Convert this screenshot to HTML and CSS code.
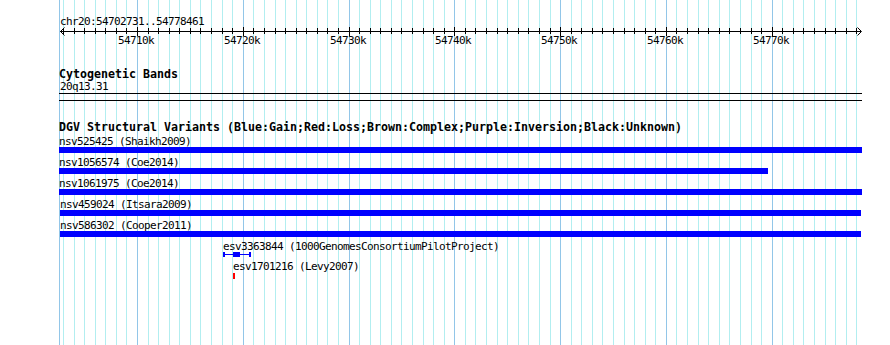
FILE: index.html
```html
<!DOCTYPE html>
<html>
<head>
    <meta charset="UTF-8">
    <title>chr20:54702731..54778461</title>
    <link rel="stylesheet" href="styles.css">
    <script src="ruler.js" defer></script>
</head>
<body>
    <div class="panel">
        <div id="grid" class="grid">
            <div class="grid-line edge" style="left:59px"></div>
        </div>

        <div class="tracks">
            <div class="ruler">
                <div class="ruler-name">chr20:54702731..54778461</div>
                <div class="axis"></div>
                <svg class="arrow left" width="5" height="9" viewBox="0 0 5 9">
                    <polyline points="4.5,0.5 0.5,4.5 4.5,8.5" fill="none" stroke="#000" stroke-width="1"/>
                </svg>
                <svg class="arrow right" width="5" height="9" viewBox="0 0 5 9">
                    <polyline points="0.5,0.5 4.5,4.5 0.5,8.5" fill="none" stroke="#000" stroke-width="1"/>
                </svg>
                <div id="ticks"></div>
                <span class="tick-label" style="left:118px">54710k</span>
                <span class="tick-label" style="left:224px">54720k</span>
                <span class="tick-label" style="left:330px">54730k</span>
                <span class="tick-label" style="left:435px">54740k</span>
                <span class="tick-label" style="left:541px">54750k</span>
                <span class="tick-label" style="left:647px">54760k</span>
                <span class="tick-label" style="left:753px">54770k</span>
            </div>

            <div class="track">
                <div class="track-title">Cytogenetic Bands</div>
                <div class="feature-label band-name">20q13.31</div>
                <div class="band"></div>
            </div>

            <div class="track">
                <div class="track-title">DGV Structural Variants (Blue:Gain;Red:Loss;Brown:Complex;Purple:Inversion;Black:Unknown)</div>
                <div class="feature-list">
                    <div class="feature" style="padding-left:59px">
                        <div class="feature-label">nsv525425 (Shaikh2009)</div>
                        <div class="bar gain" style="width:803px"></div>
                    </div>
                    <div class="feature" style="padding-left:59px">
                        <div class="feature-label">nsv1056574 (Coe2014)</div>
                        <div class="bar gain" style="width:709px"></div>
                    </div>
                    <div class="feature" style="padding-left:59px">
                        <div class="feature-label">nsv1061975 (Coe2014)</div>
                        <div class="bar gain" style="width:803px"></div>
                    </div>
                    <div class="feature" style="padding-left:60px">
                        <div class="feature-label">nsv459024 (Itsara2009)</div>
                        <div class="bar gain" style="width:801px"></div>
                    </div>
                    <div class="feature" style="padding-left:60px">
                        <div class="feature-label">nsv586302 (Cooper2011)</div>
                        <div class="bar gain" style="width:801px"></div>
                    </div>
                    <div class="feature" style="padding-left:223px">
                        <div class="feature-label">esv3363844 (1000GenomesConsortiumPilotProject)</div>
                        <svg class="span-glyph" width="28" height="5" viewBox="0 0 28 5">
                            <rect x="0" y="0" width="2" height="5" fill="#0000ff"/>
                            <rect x="0" y="2" width="28" height="1" fill="#0000ff"/>
                            <rect x="10" y="0" width="7" height="5" fill="#0000ff"/>
                            <rect x="26" y="0" width="2" height="5" fill="#0000ff"/>
                        </svg>
                    </div>
                    <div class="feature" style="padding-left:233px">
                        <div class="feature-label">esv1701216 (Levy2007)</div>
                        <div class="point loss"></div>
                    </div>
                </div>
            </div>
        </div>
    </div>
</body>
</html>
```

FILE: styles.css
```css
body {
    margin: 0;
    background: #fff;
    color: #000;
    font-family: "DejaVu Sans Mono", monospace;
}

.panel {
    position: relative;
    width: 890px;
    height: 345px;
    overflow: hidden;
}

/* background grid, one line per kb */
.grid {
    position: absolute;
    top: 0;
    left: 0;
    right: 0;
    bottom: 0;
}

.grid-line {
    position: absolute;
    top: 0;
    bottom: 0;
    width: 1px;
    background: #b2eef0;
}

.grid-line.major,
.grid-line.edge {
    background: #92c6e8;
}

.tracks {
    position: relative;
}

/* ruler */
.ruler {
    position: relative;
    height: 48px;
}

.ruler-name {
    padding: 15px 0 0 60px;
    font-size: 11px;
    letter-spacing: -0.62px;
    line-height: 13px;
}

.axis {
    position: absolute;
    left: 60px;
    top: 31px;
    width: 801px;
    height: 1px;
    background: #000;
}

.arrow {
    position: absolute;
    top: 27px;
}

.arrow.left {
    left: 60px;
}

.arrow.right {
    left: 857px;
}

.tick {
    position: absolute;
    top: 28px;
    width: 1px;
    height: 6px;
    background: #000;
}

.tick.major {
    top: 27px;
    height: 9px;
}

.tick-label {
    position: absolute;
    top: 35px;
    font-size: 11px;
    letter-spacing: -0.62px;
    line-height: 11px;
}

/* tracks */
.track-title {
    margin: 20px 0 0 59px;
    font-size: 11.63px;
    font-weight: bold;
    line-height: 13px;
    white-space: nowrap;
}

.feature-label {
    font-size: 11px;
    letter-spacing: -0.62px;
    line-height: 11px;
    white-space: nowrap;
}

.band-name {
    margin-left: 60px;
}

.band {
    margin: 1px 0 0 59px;
    width: 803px;
    height: 6px;
    border-top: 1px solid #000;
    border-bottom: 1px solid #000;
}

.feature-list {
    margin-top: 2px;
}

.feature {
    margin-bottom: 4px;
}

.bar {
    height: 6px;
}

.gain {
    background: #0000ff;
}

.loss {
    background: #ff0000;
}

.span-glyph {
    display: block;
}

.point {
    margin-top: 1px;
    width: 2px;
    height: 6px;
}
```

FILE: ruler.js
```js
const START = 54702731;
const X0 = 60.1;
const SCALE = 0.010578; // px per bp

function toX(pos) {
    return Math.round(X0 + (pos - START) * SCALE);
}

const grid = document.getElementById('grid');
const ticks = document.getElementById('ticks');

for (let kb = 54703; kb <= 54778; kb++) {
    const x = toX(kb * 1000);
    const major = kb % 10 === 0;

    const line = document.createElement('div');
    line.className = major ? 'grid-line major' : 'grid-line';
    line.style.left = x + 'px';
    grid.appendChild(line);

    const tick = document.createElement('div');
    tick.className = major ? 'tick major' : 'tick';
    tick.style.left = x + 'px';
    ticks.appendChild(tick);
}
```
